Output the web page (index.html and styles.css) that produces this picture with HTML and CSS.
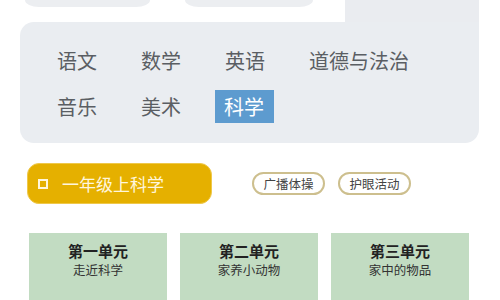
FILE: index.html
```html
<!DOCTYPE html>
<html lang="zh">
<head>
<meta charset="utf-8">
<link rel="stylesheet" href="styles.css">
</head>
<body>
<div class="top">
  <div class="top-white">
    <div class="stub stub-a"></div>
    <div class="stub stub-b"></div>
  </div>
  <div class="top-gray"></div>
</div>
<div class="panel">
  <div class="tabs">
    <span class="tab">语文</span>
    <span class="tab">数学</span>
    <span class="tab">英语</span>
    <span class="tab">道德与法治</span>
    <span class="tab">音乐</span>
    <span class="tab">美术</span>
    <span class="tab active">科学</span>
  </div>
</div>
<div class="bar">
  <div class="grade">
    <span class="grade-icon"></span>
    <span class="grade-text">一年级上科学</span>
  </div>
  <span class="tag">广播体操</span>
  <span class="tag">护眼活动</span>
</div>
<div class="cards">
  <div class="card"><div class="card-title">第一单元</div><div class="card-sub">走近科学</div></div>
  <div class="card"><div class="card-title">第二单元</div><div class="card-sub">家养小动物</div></div>
  <div class="card"><div class="card-title">第三单元</div><div class="card-sub">家中的物品</div></div>
</div>
</body>
</html>
```
FILE: styles.css
```css
html, body {
  margin: 0;
  padding: 0;
  background: #ffffff;
  font-family: "Noto Sans CJK SC", "Noto Sans", sans-serif;
  width: 500px;
  height: 300px;
  overflow: hidden;
}
.top {
  display: flex;
  height: 22px;
}
.top-white {
  width: 345px;
  background: #ffffff;
  display: flex;
  padding-left: 25px;
  box-sizing: border-box;
  gap: 35px;
}
.stub {
  height: 7px;
  background: #eceef1;
  border-radius: 0 0 14px 14px / 0 0 7px 7px;
}
.stub-a { width: 125px; }
.stub-b { width: 128px; }
.top-gray {
  width: 134px;
  background: #eaecf0;
}
.panel {
  margin-left: 20px;
  width: 459px;
  height: 121px;
  box-sizing: border-box;
  background: #eaedf1;
  border-radius: 14px 0 14px 14px;
  padding: 22px 0 0 27px;
}
.tabs {
  display: grid;
  grid-template-columns: 84px 84px 84px auto;
  grid-auto-rows: 33px;
  row-gap: 13px;
  justify-items: start;
}
.tab {
  font-size: 20px;
  line-height: 33px;
  height: 33px;
  padding: 0 10px;
  color: #5a5e63;
  white-space: nowrap;
}
.tab.active {
  background: #5d9bcf;
  color: #ffffff;
  padding: 0 10px 0 9px;
}
.bar {
  display: flex;
  align-items: center;
  margin: 20px 0 0 27px;
}
.grade {
  width: 185px;
  height: 41px;
  box-sizing: border-box;
  background: #e5b000;
  border: 1px solid #efc84a;
  border-radius: 12px;
  display: flex;
  align-items: center;
  padding-left: 10px;
  margin-right: 40px;
}
.grade-icon {
  width: 10px;
  height: 10px;
  box-sizing: border-box;
  border: 2px solid #fff6dc;
  margin-right: 14px;
}
.grade-text {
  font-size: 17px;
  color: #fff6dc;
  line-height: 1;
}
.tag {
  width: 73px;
  height: 23px;
  box-sizing: border-box;
  border: 2px solid #cdbf8e;
  border-radius: 12px;
  font-size: 12.5px;
  line-height: 19px;
  text-align: center;
  color: #444444;
  margin-right: 13px;
}
.cards {
  display: flex;
  gap: 13px;
  margin: 29px 0 0 29px;
}
.card {
  width: 138px;
  height: 80px;
  background: #c2dcc2;
  text-align: center;
  padding-top: 9px;
  box-sizing: border-box;
}
.card-title {
  font-size: 15px;
  font-weight: bold;
  line-height: 18px;
  color: #222222;
}
.card-sub {
  font-size: 12.5px;
  line-height: 16px;
  margin-top: 2px;
  color: #333333;
}
```
